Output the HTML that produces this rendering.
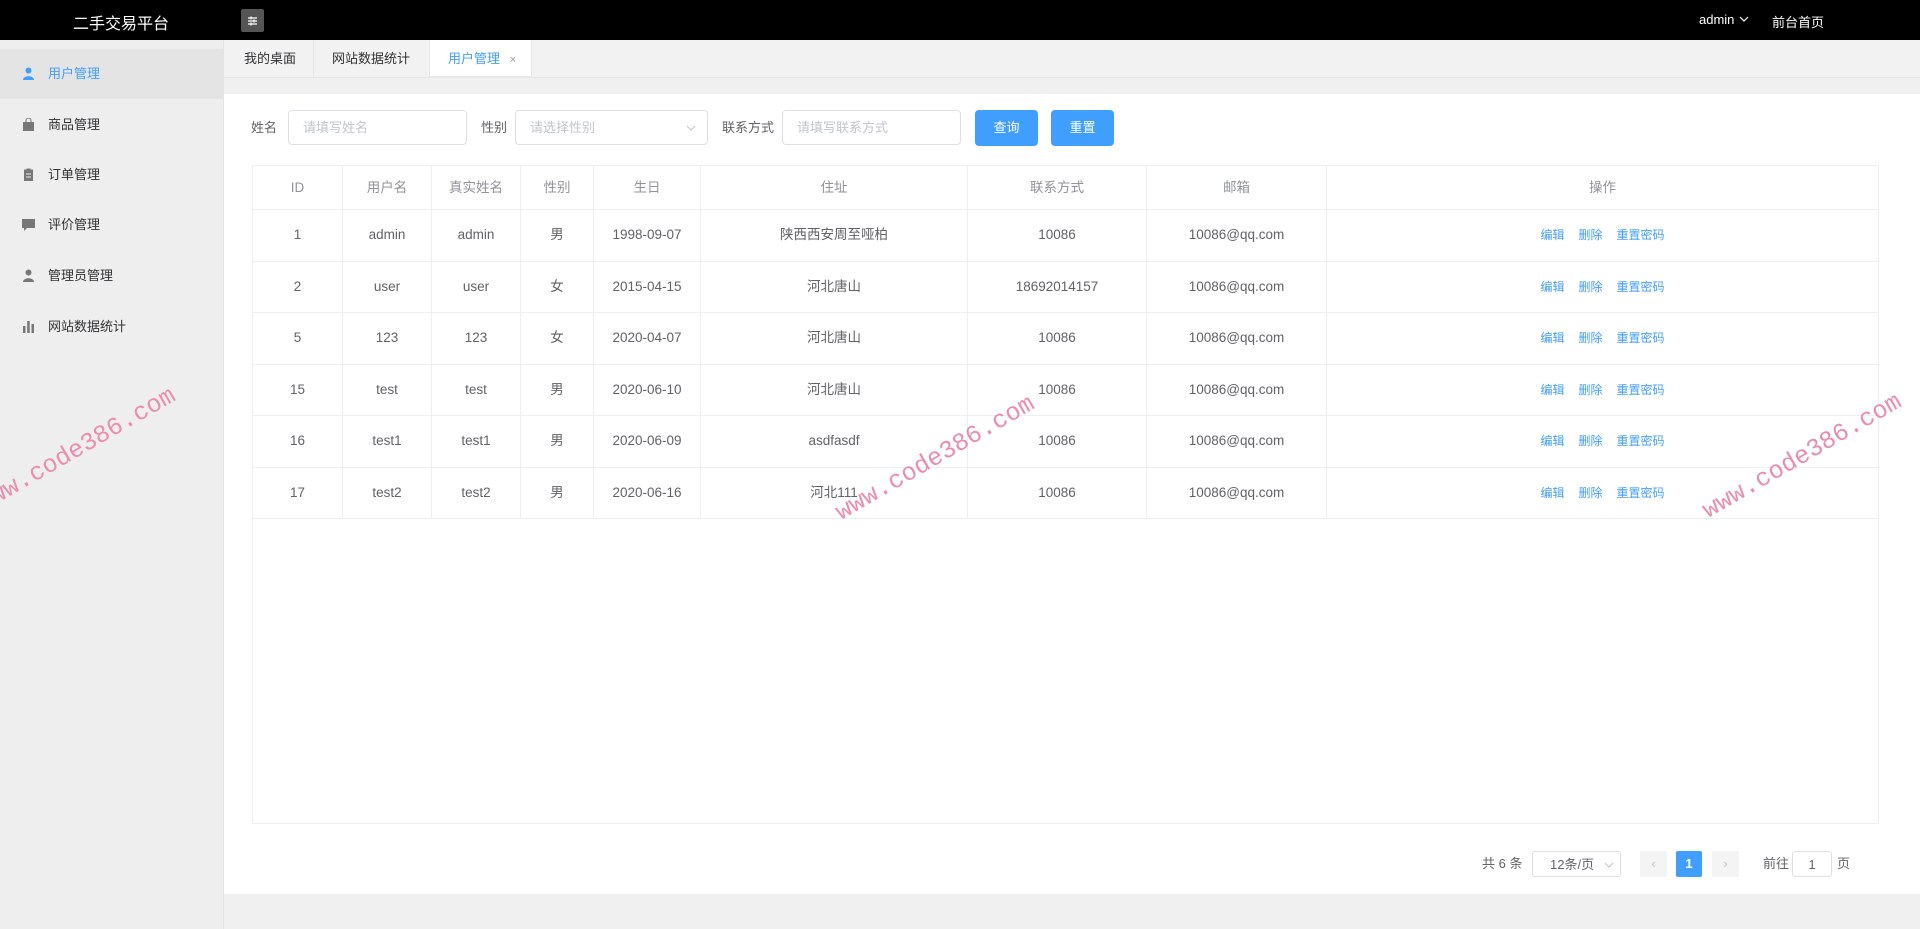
<!DOCTYPE html>
<html><head><meta charset="utf-8"><style>
*{margin:0;padding:0;box-sizing:border-box}
body{width:1920px;height:929px;overflow:hidden;background:#f0f0f0;font-family:"Liberation Sans","Noto Sans CJK SC",sans-serif;font-size:14px;color:#606266;position:relative}
.hdr{position:absolute;left:0;top:0;width:1920px;height:40px;background:#000;color:#fff}
.title{position:absolute;left:73px;top:10px;font-size:16px}
.tog{position:absolute;left:241px;top:9px;width:23px;height:23px;background:#555;border-radius:2px}
.side{position:absolute;left:0;top:40px;width:224px;height:889px;background:#eeeeee;border-right:1px solid #e2e2e2}
.item{position:absolute;left:0;width:224px;height:50px;line-height:50px;padding-left:48px;color:#303133;font-size:13px}
.item.act{background:#e4e4e4;color:#409eff}
.ic{position:absolute;left:22px;top:18px;width:13px;height:13px}
.tabs{position:absolute;left:224px;top:40px;width:1696px;height:38px;background:#f2f2f2;border-bottom:1px solid #e6e6e6}
.tab{position:absolute;top:0;height:38px;line-height:38px;color:#303133;font-size:13px}
.panel{position:absolute;left:224px;top:94px;width:1696px;height:800px;background:#fff}
.lbl{position:absolute;top:0;line-height:35px;color:#606266;font-size:13px}
.inp{position:absolute;top:0;height:35px;border:1px solid #dcdfe6;border-radius:4px;line-height:33px;padding-left:14px;color:#c0c4cc;font-size:13px}
.btn{position:absolute;top:0;height:36px;width:63px;background:#409eff;color:#fff;border-radius:4px;text-align:center;line-height:36px;font-size:13px}
table{position:absolute;left:252px;top:165px;width:1627px;border-collapse:collapse;border:1px solid #ebeef5}
td,th{border:1px solid #ebeef5;text-align:center;font-weight:normal;font-size:13.5px;line-height:16px;vertical-align:middle}
th{height:44px;color:#909399}
td{height:51.5px;color:#606266}
.op{color:#409eff;font-size:12px;margin:0 7px}
.wm{position:absolute;font-family:"Liberation Mono",monospace;font-size:25px;color:#ea8fab;transform:rotate(-30deg);transform-origin:0 100%;white-space:nowrap}
.pg{position:absolute;top:851px;height:26px;line-height:26px;font-size:13px}
</style></head><body>
<div class="hdr"><div class="title">二手交易平台</div>
<div class="tog"><svg width="23" height="23"><path d="M7 9h9M7 12h9M7 15h9" stroke="#fff" stroke-width="1.3"/><path d="M10 7.5v3M13 10.5v3M10 13.5v3" stroke="#fff" stroke-width="1.3"/></svg></div>
<div style="position:absolute;left:1699px;top:12px;font-size:13px">admin <svg width="12" height="10"><path d="M2 3l4 4 4-4" stroke="#fff" fill="none" stroke-width="1.2"/></svg></div>
<div style="position:absolute;left:1772px;top:12px;font-size:13px">前台首页</div></div>
<div class="side">
<div class="item act" style="top:9px"><svg class="ic" viewBox="0 0 13 13"><circle cx="6.5" cy="3.5" r="3" fill="#409eff"/><path d="M1 13c0-5 11-5 11 0z" fill="#409eff"/></svg>用户管理</div>
<div class="item" style="top:60px"><svg class="ic" viewBox="0 0 13 13"><path d="M4 4V2.5a2.5 2.5 0 015 0V4" stroke="#777" fill="none"/><rect x="1" y="4" width="11" height="9" fill="#777"/></svg>商品管理</div>
<div class="item" style="top:110px"><svg class="ic" viewBox="0 0 13 13"><rect x="2" y="1.5" width="9" height="11.5" fill="#777"/><rect x="4.5" y="0.5" width="4" height="2" fill="#777"/><path d="M4 6h5M4 9h5" stroke="#eee"/></svg>订单管理</div>
<div class="item" style="top:160px"><svg class="ic" viewBox="0 0 13 13"><path d="M0 1h13v9H5l-3 3v-3H0z" fill="#777"/></svg>评价管理</div>
<div class="item" style="top:211px"><svg class="ic" viewBox="0 0 13 13"><circle cx="6.5" cy="3.5" r="3" fill="#777"/><path d="M1 13c0-5 11-5 11 0z" fill="#777"/></svg>管理员管理</div>
<div class="item" style="top:262px"><svg class="ic" viewBox="0 0 13 13"><rect x="1" y="6" width="2.5" height="7" fill="#777"/><rect x="5.2" y="1" width="2.5" height="12" fill="#777"/><rect x="9.5" y="4" width="2.5" height="9" fill="#777"/></svg>网站数据统计</div>
</div>
<div class="tabs">
<div class="tab" style="left:20px">我的桌面</div>
<div style="position:absolute;left:89px;top:0;width:1px;height:38px;background:#e6e6e6"></div>
<div class="tab" style="left:108px">网站数据统计</div>
<div style="position:absolute;left:205px;top:0;width:1px;height:38px;background:#e6e6e6"></div>
<div class="tab" style="left:206px;width:101px;background:#fff;padding-left:18px;color:#409eff;border-bottom:2px solid #e8e8e8">用户管理 <span style="color:#999;font-size:11px;margin-left:6px">×</span></div>
<div style="position:absolute;left:307px;top:0;width:1px;height:38px;background:#e6e6e6"></div>
</div>
<div class="panel">
<div style="position:absolute;left:0;top:16px;width:1696px;height:36px">
<div class="lbl" style="left:27px">姓名</div>
<div class="inp" style="left:64px;width:179px">请填写姓名</div>
<div class="lbl" style="left:257px">性别</div>
<div class="inp" style="left:291px;width:193px">请选择性别<svg style="position:absolute;right:10px;top:12px" width="12" height="10"><path d="M2 3l4 4 4-4" stroke="#c0c4cc" fill="none"/></svg></div>
<div class="lbl" style="left:498px">联系方式</div>
<div class="inp" style="left:558px;width:179px">请填写联系方式</div>
<div class="btn" style="left:751px">查询</div>
<div class="btn" style="left:827px">重置</div>
</div>
</div>
<table>
<tr><th style="width:90px">ID</th><th style="width:89px">用户名</th><th style="width:89px">真实姓名</th><th style="width:73px">性别</th><th style="width:107px">生日</th><th style="width:267px">住址</th><th style="width:179px">联系方式</th><th style="width:180px">邮箱</th><th>操作</th></tr>
<tr><td>1</td><td>admin</td><td>admin</td><td>男</td><td>1998-09-07</td><td>陕西西安周至哑柏</td><td>10086</td><td>10086@qq.com</td><td><span class="op">编辑</span><span class="op">删除</span><span class="op">重置密码</span></td></tr>
<tr><td>2</td><td>user</td><td>user</td><td>女</td><td>2015-04-15</td><td>河北唐山</td><td>18692014157</td><td>10086@qq.com</td><td><span class="op">编辑</span><span class="op">删除</span><span class="op">重置密码</span></td></tr>
<tr><td>5</td><td>123</td><td>123</td><td>女</td><td>2020-04-07</td><td>河北唐山</td><td>10086</td><td>10086@qq.com</td><td><span class="op">编辑</span><span class="op">删除</span><span class="op">重置密码</span></td></tr>
<tr><td>15</td><td>test</td><td>test</td><td>男</td><td>2020-06-10</td><td>河北唐山</td><td>10086</td><td>10086@qq.com</td><td><span class="op">编辑</span><span class="op">删除</span><span class="op">重置密码</span></td></tr>
<tr><td>16</td><td>test1</td><td>test1</td><td>男</td><td>2020-06-09</td><td>asdfasdf</td><td>10086</td><td>10086@qq.com</td><td><span class="op">编辑</span><span class="op">删除</span><span class="op">重置密码</span></td></tr>
<tr><td>17</td><td>test2</td><td>test2</td><td>男</td><td>2020-06-16</td><td>河北111</td><td>10086</td><td>10086@qq.com</td><td><span class="op">编辑</span><span class="op">删除</span><span class="op">重置密码</span></td></tr>
<tr><td colspan="9" style="height:305px;border:none"></td></tr>
</table>
<div class="pg" style="left:1482px">共 6 条</div>
<div class="pg" style="left:1532px;width:89px;border:1px solid #dcdfe6;border-radius:3px;padding-left:17px">12条/页<svg style="position:absolute;right:6px;top:9px" width="10" height="8"><path d="M1 2l4 4 4-4" stroke="#c0c4cc" fill="none"/></svg></div>
<div class="pg" style="left:1640px;width:27px;background:#f4f4f5;text-align:center;color:#c0c4cc">‹</div>
<div class="pg" style="left:1676px;width:26px;background:#409eff;color:#fff;text-align:center;font-weight:bold;border-radius:2px">1</div>
<div class="pg" style="left:1712px;width:27px;background:#f4f4f5;text-align:center;color:#c0c4cc">›</div>
<div class="pg" style="left:1763px">前往</div>
<div class="pg" style="left:1792px;width:40px;border:1px solid #dcdfe6;border-radius:3px;text-align:center">1</div>
<div class="pg" style="left:1837px">页</div>
<div class="wm" style="left:-14px;top:490px">www.code386.com</div>
<div class="wm" style="left:845px;top:498px">www.code386.com</div>
<div class="wm" style="left:1712px;top:496px">www.code386.com</div>
</body></html>
